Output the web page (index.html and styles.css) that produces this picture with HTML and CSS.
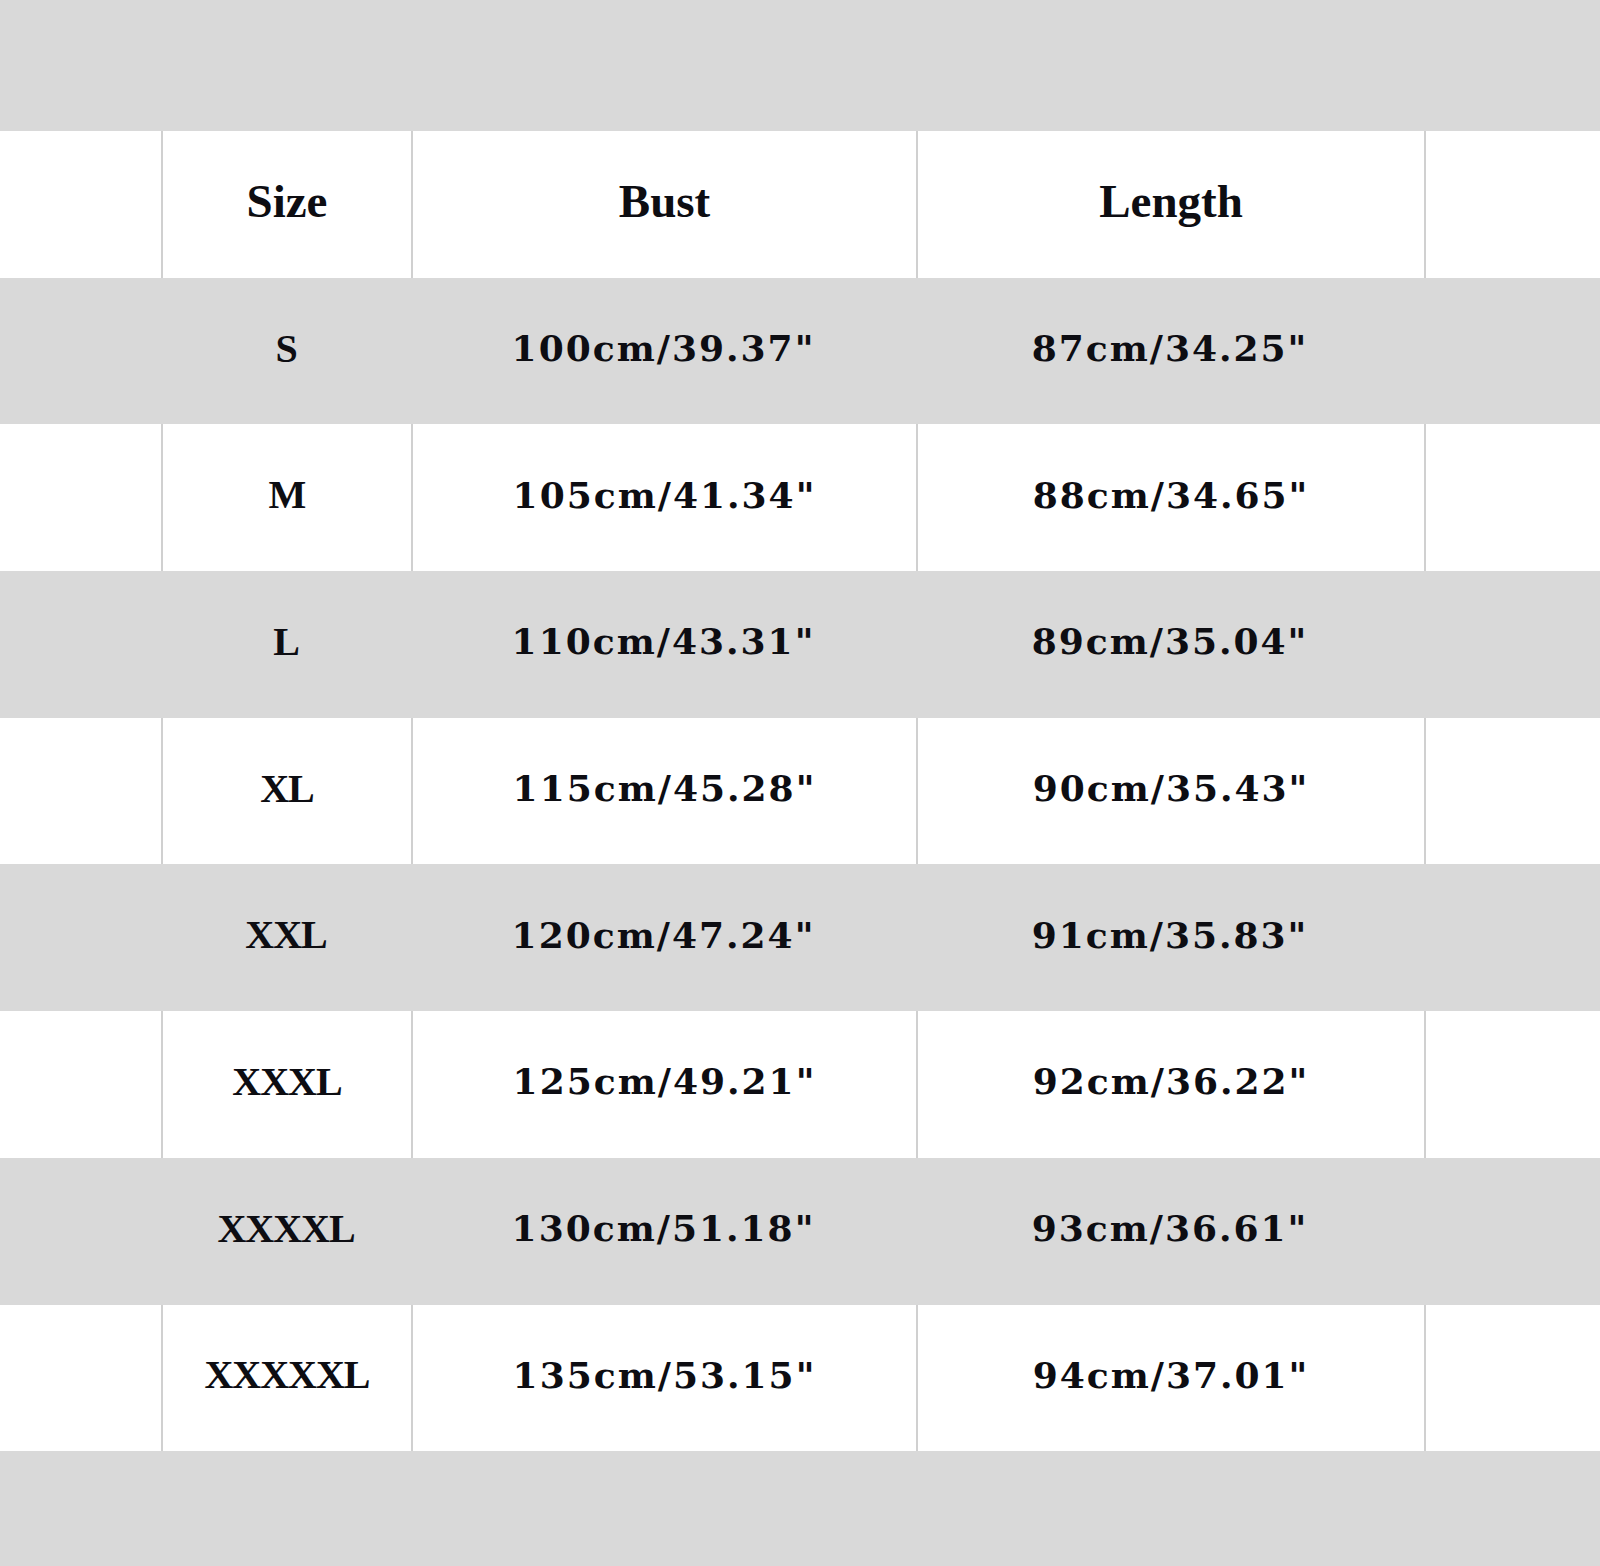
FILE: index.html
```html
<!DOCTYPE html>
<html>
<head>
<meta charset="utf-8">
<link rel="stylesheet" href="styles.css">
</head>
<body>
<div class="page">
  <div class="band top"></div>
  <div class="row white head">
    <div class="cell"></div>
    <div class="cell lined"><span class="h">Size</span></div>
    <div class="cell lined"><span class="h">Bust</span></div>
    <div class="cell lined"><span class="h">Length</span></div>
    <div class="cell lined"></div>
  </div>
  <div class="row gray">
    <div class="cell"></div><div class="cell sz">S</div><div class="cell v">100cm/39.37"</div><div class="cell v">87cm/34.25"</div><div class="cell"></div>
  </div>
  <div class="row white">
    <div class="cell"></div><div class="cell sz lined">M</div><div class="cell v lined">105cm/41.34"</div><div class="cell v lined">88cm/34.65"</div><div class="cell lined"></div>
  </div>
  <div class="row gray">
    <div class="cell"></div><div class="cell sz">L</div><div class="cell v">110cm/43.31"</div><div class="cell v">89cm/35.04"</div><div class="cell"></div>
  </div>
  <div class="row white">
    <div class="cell"></div><div class="cell sz lined">XL</div><div class="cell v lined">115cm/45.28"</div><div class="cell v lined">90cm/35.43"</div><div class="cell lined"></div>
  </div>
  <div class="row gray">
    <div class="cell"></div><div class="cell sz">XXL</div><div class="cell v">120cm/47.24"</div><div class="cell v">91cm/35.83"</div><div class="cell"></div>
  </div>
  <div class="row white">
    <div class="cell"></div><div class="cell sz lined">XXXL</div><div class="cell v lined">125cm/49.21"</div><div class="cell v lined">92cm/36.22"</div><div class="cell lined"></div>
  </div>
  <div class="row gray">
    <div class="cell"></div><div class="cell sz">XXXXL</div><div class="cell v">130cm/51.18"</div><div class="cell v">93cm/36.61"</div><div class="cell"></div>
  </div>
  <div class="row white">
    <div class="cell"></div><div class="cell sz lined">XXXXXL</div><div class="cell v lined">135cm/53.15"</div><div class="cell v lined">94cm/37.01"</div><div class="cell lined"></div>
  </div>
  <div class="band bottom"></div>
</div>
</body>
</html>
```

FILE: styles.css
```css
html, body {
  margin: 0;
  padding: 0;
  background: #d9d9d9;
}
.page {
  width: 1600px;
  height: 1566px;
  display: flex;
  flex-direction: column;
  overflow: hidden;
}
.band {
  background: #d9d9d9;
}
.band.top {
  height: 131px;
  flex: none;
}
.band.bottom {
  flex: 1;
}
.row {
  display: grid;
  grid-template-columns: 161px 250px 505px 508px 1fr;
  height: 146.7px;
  flex: none;
}
.row.white { background: #ffffff; }
.row.gray { background: #d9d9d9; }
.cell {
  display: flex;
  align-items: center;
  justify-content: center;
  color: #0d0d12;
  padding-bottom: 6px;
  box-sizing: border-box;
}
.cell.lined {
  border-left: 2px solid #d0d0d0;
}
.h {
  font-family: "Liberation Serif", "Times New Roman", serif;
  font-weight: bold;
  font-size: 47px;
}
.sz {
  font-family: "Liberation Serif", "Times New Roman", serif;
  font-weight: bold;
  font-size: 40px;
  letter-spacing: -1px;
}
.v {
  font-family: "DejaVu Serif", serif;
  font-weight: bold;
  font-size: 36px;
  letter-spacing: 2px;
}
```
